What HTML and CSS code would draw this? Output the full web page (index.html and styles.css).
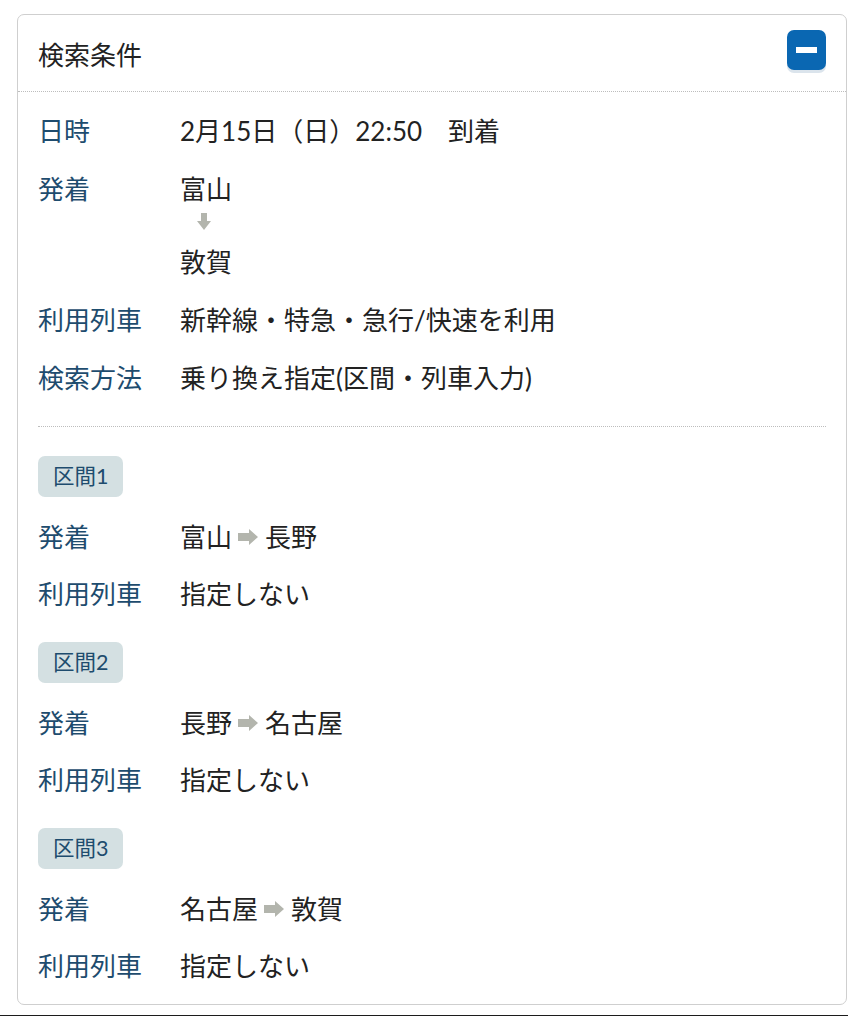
FILE: index.html
```html
<!DOCTYPE html>
<html lang="ja">
<head>
<meta charset="utf-8">
<title>検索条件</title>
<link rel="stylesheet" href="styles.css">
</head>
<body>
<section class="panel">
  <header class="panel-head">
    <h2 class="panel-title">検索条件</h2>
    <button class="toggle" type="button" aria-label="閉じる"><span class="toggle-bar"></span></button>
  </header>
  <div class="panel-body">
    <dl class="conds">
      <div class="row"><dt>日時</dt><dd>2月15日（日）22:50　到着</dd></div>
      <div class="row">
        <dt>発着</dt>
        <dd>
          <div class="route-v">
            <span>富山</span>
            <svg class="arrow-down" width="14" height="17" viewBox="0 0 14 17"><path d="M4 0h6v8h4l-7 9L0 8h4z" fill="#b3b5ad"/></svg>
            <span>敦賀</span>
          </div>
        </dd>
      </div>
      <div class="row"><dt>利用列車</dt><dd>新幹線・特急・急行/快速を利用</dd></div>
      <div class="row"><dt>検索方法</dt><dd>乗り換え指定(区間・列車入力)</dd></div>
    </dl>

    <hr class="divider">

    <div class="section">
      <span class="badge">区間1</span>
      <dl class="conds">
        <div class="row"><dt>発着</dt><dd>富山<svg class="arrow-right" width="20" height="16" viewBox="0 0 20 16"><path d="M0 4h11V0l9 8-9 8v-4H0z" fill="#b3b5ad"/></svg>長野</dd></div>
        <div class="row"><dt>利用列車</dt><dd>指定しない</dd></div>
      </dl>
    </div>
    <div class="section">
      <span class="badge">区間2</span>
      <dl class="conds">
        <div class="row"><dt>発着</dt><dd>長野<svg class="arrow-right" width="20" height="16" viewBox="0 0 20 16"><path d="M0 4h11V0l9 8-9 8v-4H0z" fill="#b3b5ad"/></svg>名古屋</dd></div>
        <div class="row"><dt>利用列車</dt><dd>指定しない</dd></div>
      </dl>
    </div>
    <div class="section">
      <span class="badge">区間3</span>
      <dl class="conds">
        <div class="row"><dt>発着</dt><dd>名古屋<svg class="arrow-right" width="20" height="16" viewBox="0 0 20 16"><path d="M0 4h11V0l9 8-9 8v-4H0z" fill="#b3b5ad"/></svg>敦賀</dd></div>
        <div class="row"><dt>利用列車</dt><dd>指定しない</dd></div>
      </dl>
    </div>
  </div>
</section>
<div class="page-edge"></div>
</body>
</html>
```

FILE: styles.css
```css
html, body {
  margin: 0;
  padding: 0;
  background: #fff;
}

body {
  padding: 14px 1px 0 17px;
  font-family: "Lato", "Noto Sans CJK JP", sans-serif;
  font-size: 26px;
  line-height: 38px;
  color: #222;
}

.panel {
  border: 1px solid #cfcfcf;
  border-radius: 7px;
  background: #fff;
}

.panel-head {
  display: flex;
  justify-content: space-between;
  align-items: flex-start;
  padding: 15px 20px 17px 20px;
  border-bottom: 1px dotted #bdbdbd;
}

.panel-title {
  margin: 6px 0 0 0;
  font-size: 26px;
  font-weight: normal;
  line-height: 38px;
  color: #222;
}

.toggle {
  width: 39px;
  height: 40px;
  padding: 0;
  border: none;
  border-radius: 7px;
  background: #0a67b2;
  box-shadow: 0 3px 0 #dbe4ec;
  display: flex;
  align-items: center;
  justify-content: center;
}

.toggle-bar {
  display: block;
  width: 21px;
  height: 6px;
  background: #fff;
}

.panel-body {
  padding: 20px 20px 19px 20px;
}

.conds {
  margin: 0;
  display: flex;
  flex-direction: column;
  gap: 20px;
}

.row {
  display: flex;
}

.row dt {
  width: 142px;
  flex: none;
  color: #1e4c6e;
}

.row dd {
  margin: 0;
  display: flex;
  align-items: center;
}

.route-v {
  display: flex;
  flex-direction: column;
  align-items: flex-start;
}

.arrow-down {
  display: block;
  margin: 5px 0 13px 17px;
}

.arrow-right {
  flex: none;
  margin: 0 7px 0 6px;
}

.divider {
  margin: 29px 0 29px 0;
  border: none;
  border-top: 1px dotted #bdbdbd;
  height: 0;
}

.section {
  display: flex;
  flex-direction: column;
  align-items: flex-start;
  gap: 21px;
}

.section + .section {
  margin-top: 29px;
}

.section .conds {
  align-self: stretch;
  gap: 19px;
}

.badge {
  display: inline-block;
  height: 41px;
  padding: 0 15px;
  border-radius: 7px;
  background: #d4e0e2;
  color: #1e4c6e;
  font-size: 21.5px;
  line-height: 41px;
}

.page-edge {
  margin: 10px -1px 0 -17px;
  height: 3px;
  background: #1c1c1c;
}
```
